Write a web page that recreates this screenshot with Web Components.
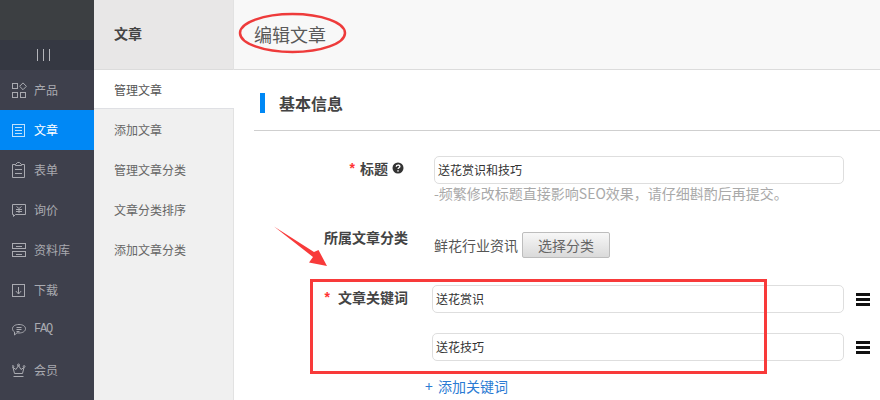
<!DOCTYPE html>
<html lang="zh">
<head>
<meta charset="utf-8">
<title>编辑文章</title>
<style>
  html, body { margin: 0; height: 100%; overflow: hidden; background: #fff; }
  body { font-family: "Noto Sans CJK SC", "Liberation Sans", sans-serif; }
</style>
</head>
<body>
<app-shell>
  <side-nav slot="side">
    <nav-item>产品<svg slot="icon" width="15" height="16" viewBox="0 0 15 16" fill="none" stroke="currentColor"><rect x=".5" y="1.500" width="5" height="5"/><path d="M11 .9l3.400 3.400-3.400 3.400-3.400-3.400z"/><rect x=".5" y="10.500" width="5" height="5"/><rect x="8.500" y="10.500" width="5" height="5"/></svg></nav-item>
    <nav-item active>文章<svg slot="icon" width="15" height="16" viewBox="0 0 15 16" fill="none" stroke="currentColor" opacity=".75"><rect x=".5" y="2.500" width="12" height="12"/><path d="M3 5.500h7M3 8.500h7M3 11.500h7"/></svg></nav-item>
    <nav-item>表单<svg slot="icon" width="15" height="16" viewBox="0 0 15 16" fill="none" stroke="currentColor"><path d="M3.500 2.500h-3v13h12v-13h-3M3.500 3.500v-1l2-2h2l2 2v1z"/><path d="M3 7.500h7M3 11.500h7"/></svg></nav-item>
    <nav-item>询价<svg slot="icon" width="15" height="16" viewBox="0 0 15 16" fill="none" stroke="currentColor"><path d="M.5 2.500h13v10h-10l-2 2v-2h-1z"/><path d="M4.500 4.500l2.500 2 2.500-2M4 7.500h6M4 9.500h6M7 7v4"/></svg></nav-item>
    <nav-item>资料库<svg slot="icon" width="15" height="16" viewBox="0 0 15 16" fill="none" stroke="currentColor"><rect x=".5" y="1.500" width="13" height="5"/><rect x=".5" y="9.500" width="13" height="5"/><path d="M4 4.500h6M4 12.500h6"/></svg></nav-item>
    <nav-item>下载<svg slot="icon" width="15" height="16" viewBox="0 0 15 16" fill="none" stroke="currentColor"><rect x=".5" y="2.500" width="12" height="12"/><path d="M6.500 5v7M3.800 9l2.700 3 2.700-3"/></svg></nav-item>
    <nav-item faq>FAQ<svg slot="icon" width="15" height="16" viewBox="0 0 15 16" fill="none" stroke="currentColor"><path d="M7 2.500c3.800 0 6.500 1.700 6.500 4.200s-2.700 4.300-6.500 4.300c-.7 0-1.400-.1-2-.2l-2.500 2.200v-3c-1.200-.8-2-1.900-2-3.300 0-2.500 2.700-4.200 6.500-4.200z"/><path d="M4.500 5.500h5M4.500 7.500h5M4.500 9.500h3"/></svg></nav-item>
    <nav-item>会员<svg slot="icon" width="15" height="16" viewBox="0 0 15 16" fill="none" stroke="currentColor"><path d="M2.500 11.500l-1.500-6 3 2 2.500-4 2.500 4 3-2-1.500 6z"/><circle cx="6.500" cy="3" r="1"/><circle cx=".9" cy="4.500" r=".9"/><circle cx="12.100" cy="4.500" r=".9"/><path d="M1.500 14.500h10"/></svg></nav-item>
  </side-nav>
  <sub-nav slot="sub" heading="文章">
    <sub-item active>管理文章</sub-item>
    <sub-item>添加文章</sub-item>
    <sub-item>管理文章分类</sub-item>
    <sub-item>文章分类排序</sub-item>
    <sub-item>添加文章分类</sub-item>
  </sub-nav>
  <edit-panel slot="main" heading="编辑文章">
    <section-title>基本信息</section-title>
    <form-row required help style="--row-mb:29px">
      <span slot="label">标题</span>
      <text-field>送花赏识和技巧</text-field>
      <p class="hint">-频繁修改标题直接影响SEO效果，请仔细斟酌后再提交。</p>
    </form-row>
    <form-row style="--row-mb:25px;--label-up:18px">
      <span slot="label">所属文章分类</span>
      <div class="pick"><span>鲜花行业资讯</span><pick-button>选择分类</pick-button></div>
    </form-row>
    <form-row required wide style="--row-mb:20px">
      <span slot="label">文章关键词</span>
      <keyword-line>送花赏识</keyword-line>
    </form-row>
    <form-row wide style="--row-mb:15px">
      <keyword-line>送花技巧</keyword-line>
    </form-row>
    <form-row style="--row-mb:0">
      <a class="add">+ 添加关键词</a>
    </form-row>
  </edit-panel>
  <mark-up slot="over"></mark-up>
</app-shell>

<style>
  .hint { margin: -1px 0 0; font-size: 14px; line-height: 20px; color: #a9a9a9; white-space: nowrap; }
  .pick { display: flex; align-items: center; gap: 4px; font-size: 14px; color: #555; }
  .add { display: block; margin-left: -9px; font-size: 14px; line-height: 20px; color: #2b7bd3; word-spacing: 2px; }
</style>

<script>
function el(html) {
  const t = document.createElement("template");
  t.innerHTML = html;
  return t;
}

function make(name, html) {
  const tpl = el(html);
  customElements.define(name, class extends HTMLElement {
    constructor() {
      super();
      this.attachShadow({ mode: "open" });
      this.shadowRoot.appendChild(tpl.content.cloneNode(true));
    }
    connectedCallback() {
      const h = this.shadowRoot.querySelector("[data-heading]");
      if (h) h.textContent = this.getAttribute("heading");
    }
  });
}

make("app-shell", `
<style>
  :host { display: block; position: relative; width: 880px; height: 400px; overflow: hidden; }
  .wrap { display: grid; grid-template-columns: 94px 140px 646px; height: 400px; }
</style>
<div class="wrap">
  <slot name="side"></slot>
  <slot name="sub"></slot>
  <slot name="main"></slot>
</div>
<slot name="over"></slot>`);

make("side-nav", `
<style>
  :host { display: block; height: 400px; background: #3e404c; }
  .logo { height: 40px; background: #3c3f42; }
  .toggle { height: 30px; background: #353842; display: flex; justify-content: center; align-items: center; gap: 5px; padding-right: 7px; }
  .toggle i { display: block; width: 1px; height: 12px; background: #b4b5ba; }
</style>
<div class="logo"></div>
<div class="toggle"><i></i><i></i><i></i></div>
<slot></slot>`);

make("nav-item", `
<style>
  :host { display: flex; align-items: center; height: 40px; padding-left: 12px; gap: 7px; font-size: 12px; color: #a9aab0; }
  :host([active]) { background: #0088f5; color: #fff; }
  :host([faq]) { font-family: "Liberation Mono", monospace; letter-spacing: -1.2px; }
  ::slotted(svg) { display: block; flex: none; }
  span { padding-bottom: 2px; }
</style>
<slot name="icon"></slot><span><slot></slot></span>`);

make("sub-nav", `
<style>
  :host { display: block; box-sizing: border-box; width: 140px; height: 400px; background: #f0f0f0; border-right: 1px solid #e2e2e2; position: relative; z-index: 1; }
  .bar { box-sizing: border-box; height: 70px; padding: 0 0 3px 20px; background: #e8e7e7; border-bottom: 1px solid #dcdcdc;
         font-size: 14px; font-weight: 700; color: #444; display: flex; align-items: center; }
</style>
<div class="bar" data-heading></div>
<slot></slot>`);

make("sub-item", `
<style>
  :host { display: flex; align-items: center; box-sizing: border-box; height: 40px; padding: 0 0 2px 20px; font-size: 12px; color: #666; }
  :host([active]) { height: 39px; padding-bottom: 1px; margin-bottom: 1px; width: 146px; color: #555;
                    background: linear-gradient(#dfe0e4, #dfe0e4) left bottom / 140px 1px no-repeat, #fff; }
</style>
<slot></slot>`);

make("edit-panel", `
<style>
  :host { display: block; height: 400px; min-width: 0; }
  header { box-sizing: border-box; height: 70px; background: #f8f8f8; border-bottom: 1px solid #dcdcdc; padding: 0 0 2px 20px; display: flex; align-items: center;
           font-size: 18px; color: #5a5a5a; }
  .body { padding-left: 20px; }
</style>
<header data-heading></header>
<div class="body"><slot></slot></div>`);

make("section-title", `
<style>
  :host { display: flex; align-items: center; box-sizing: border-box; height: 61px; padding: 6px 0 0 6px; gap: 14px; margin-bottom: 25px; border-bottom: 1px solid #cfcfcf;
          font-size: 16px; font-weight: 700; color: #444; }
  i { display: block; width: 5px; height: 20px; background: #0088f5; }
</style>
<i></i><slot></slot>`);

make("form-row", `
<style>
  :host { display: grid; grid-template-columns: 154px 1fr; column-gap: 26px; margin-bottom: var(--row-mb, 20px); }
  :host([wide]) { column-gap: 24px; }
  .label { display: flex; justify-content: flex-end; align-items: center; box-sizing: border-box; height: 28px; padding-bottom: var(--label-up, 4px);
           font-size: 14px; font-weight: 700; color: #444; white-space: nowrap; }
  .star { display: none; color: #f33; font: 700 14px "Liberation Sans", sans-serif; margin-right: 5px; }
  .help { display: none; margin-left: 4px; margin-right: 4px; }
  :host([required]) .star { display: inline; }
  :host([required][wide]) .star { margin-right: 8px; }
  :host([help]) .help { display: block; }
  .ctl { min-width: 0; width: 410px; }
  :host([wide]) .ctl { width: 446px; }
</style>
<div class="label"><span class="star">*</span><slot name="label"></slot>
  <svg class="help" width="12" height="12" viewBox="0 0 12 12"><circle cx="6" cy="6" r="5.500" fill="#333"/><path d="M4.200 4.700c0-2.200 3.700-2.200 3.700-.2 0 1.200-1.900 1.300-1.900 2.600" fill="none" stroke="#fff" stroke-width="1.300"/><rect x="5.300" y="8.200" width="1.400" height="1.400" fill="#fff"/></svg>
</div>
<div class="ctl"><slot></slot></div>`);

make("text-field", `
<style>
  :host { display: flex; align-items: center; box-sizing: border-box; height: 28px; padding: 0 0 2px 3px; border: 1px solid #dedede; border-radius: 5px;
          background: #fff; font-size: 12px; color: #333; }
</style>
<slot></slot>`);

make("keyword-line", `
<style>
  :host { display: flex; align-items: center; gap: 12px; height: 28px; }
  text-field { width: 412px; flex: none; }
  svg { display: block; }
</style>
<text-field><slot></slot></text-field>
<svg width="14" height="13" viewBox="0 0 14 13"><path d="M0 0h14v3H0zM0 5h14v3H0zM0 10h14v3H0z" fill="#111"/></svg>`);

make("pick-button", `
<style>
  :host { display: flex; align-items: center; justify-content: center; box-sizing: border-box; width: 88px; height: 26px; border: 1px solid #bdbdbd; border-radius: 2px;
          background: linear-gradient(#f7f7f7, #dadada); font-size: 14px; color: #666; }
</style>
<slot></slot>`);

make("mark-up", `
<style>
  :host { position: absolute; inset: 0; z-index: 2; pointer-events: none; display: block; }
  svg { display: block; }
</style>
<svg width="880" height="400" viewBox="0 0 880 400" fill="none">
  <ellipse cx="292.500" cy="33" rx="52.500" ry="19" stroke="#ee3b3b" stroke-width="2.500"/>
  <rect x="311.500" y="280.500" width="454" height="92" stroke="#f83a3a" stroke-width="3"/>
  <path d="M274 226.500L314 252l4.500-2 8.500 16-18-3.500 4-5.500z" fill="#f83a3a"/>
</svg>`);
</script>
</body>
</html>
